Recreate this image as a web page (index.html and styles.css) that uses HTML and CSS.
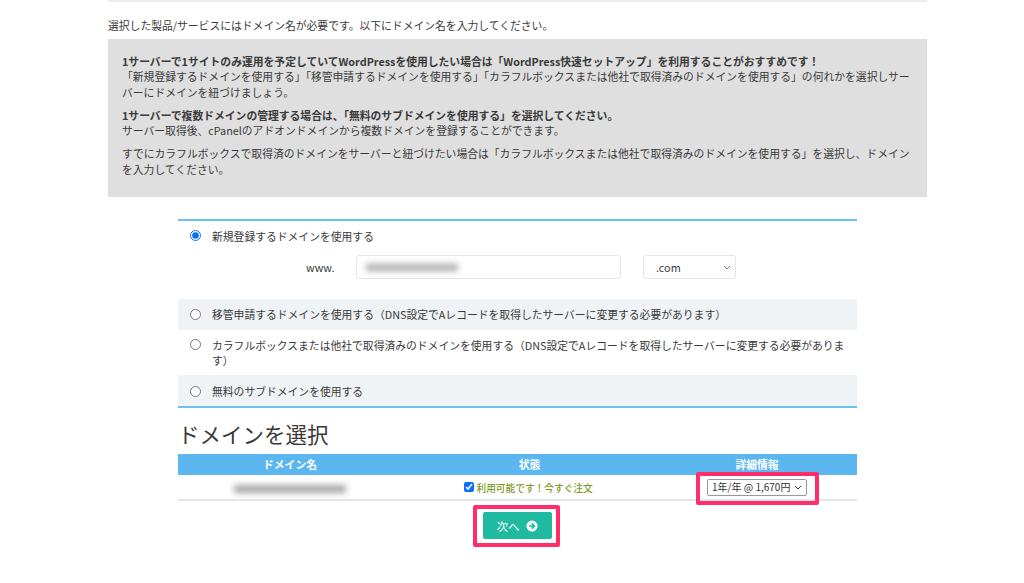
FILE: index.html
```html
<!DOCTYPE html>
<html lang="ja">
<head>
  <meta charset="UTF-8">
  <title>ドメインを選択</title>
  <link rel="stylesheet" href="styles.css">
</head>
<body>
  <div class="page">
    <p class="intro">選択した製品/サービスにはドメイン名が必要です。以下にドメイン名を入力してください。</p>
    <div class="notice">
      <p><strong>1サーバーで1サイトのみ運用を予定していてWordPressを使用したい場合は「WordPress快速セットアップ」を利用することがおすすめです！</strong><br>「新規登録するドメインを使用する」「移管申請するドメインを使用する」「カラフルボックスまたは他社で取得済みのドメインを使用する」の何れかを選択しサーバーにドメインを紐づけましょう。</p>
      <p><strong>1サーバーで複数ドメインの管理する場合は、「無料のサブドメインを使用する」を選択してください。</strong><br>サーバー取得後、cPanelのアドオンドメインから複数ドメインを登録することができます。</p>
      <p>すでにカラフルボックスで取得済のドメインをサーバーと紐づけたい場合は「カラフルボックスまたは他社で取得済みのドメインを使用する」を選択し、ドメインを入力してください。</p>
    </div>

    <div class="content">
      <div class="options">
        <div class="option option-first">
          <label class="option-label"><input type="radio" name="domain" checked><span>新規登録するドメインを使用する</span></label>
          <div class="domain-form">
            <span class="www">www.</span>
            <div class="domain-input"><span class="blur blur-input"></span></div>
            <div class="tld">.com
              <svg class="chevron" width="8" height="5" viewBox="0 0 8 5"><path d="M1 1l3 3 3-3" fill="none" stroke="#777" stroke-width="1"/></svg>
            </div>
          </div>
        </div>
        <div class="option option-alt">
          <label class="option-label"><input type="radio" name="domain"><span>移管申請するドメインを使用する（DNS設定でAレコードを取得したサーバーに変更する必要があります）</span></label>
        </div>
        <div class="option option-wrap">
          <label class="option-label"><input type="radio" name="domain"><span>カラフルボックスまたは他社で取得済みのドメインを使用する（DNS設定でAレコードを取得したサーバーに変更する必要があります）</span></label>
        </div>
        <div class="option option-alt option-last">
          <label class="option-label"><input type="radio" name="domain"><span>無料のサブドメインを使用する</span></label>
        </div>
      </div>

      <h2 class="title">ドメインを選択</h2>
      <table class="domains">
        <thead>
          <tr><th class="col-name">ドメイン名</th><th class="col-status">状態</th><th class="col-info">詳細情報</th></tr>
        </thead>
        <tbody>
          <tr>
            <td class="name"><span class="blur blur-name"></span></td>
            <td class="status"><input type="checkbox" checked> 利用可能です！今すぐ注文</td>
            <td class="info">
              <div class="period">1年/年 @ 1,670円
                <svg class="chevron" width="8" height="5" viewBox="0 0 8 5"><path d="M1 1l3 3 3-3" fill="none" stroke="#333" stroke-width="1"/></svg>
              </div>
              <span class="mark mark-period"></span>
            </td>
          </tr>
        </tbody>
      </table>
      <div class="actions">
        <button class="next" type="button">次へ
          <svg width="12" height="12" viewBox="0 0 13 13"><circle cx="6.5" cy="6.5" r="6" fill="#fff"/><path d="M3.2 6.5h5.6M6.3 3.7l2.8 2.8-2.8 2.8" fill="none" stroke="#1fba9f" stroke-width="1.7"/></svg>
          <span class="mark mark-next"></span>
        </button>
      </div>
    </div>
  </div>
</body>
</html>
```

FILE: styles.css
```css
* {
  box-sizing: border-box;
}
body {
  margin: 0;
  background: #fff;
  color: #3a3a3a;
  font-family: "Noto Sans CJK JP", "Noto Sans", sans-serif;
  font-size: 10.8px;
  line-height: 15.4px;
}
.page {
  width: 819px;
  margin-left: 108px;
  border-top: 2px solid #e9edf2;
  height: 583px;
  overflow: hidden;
}
.intro {
  margin: 16px 0 5.6px;
}
.notice {
  height: 158px;
  padding: 15px 14px 0;
  background: #dfdfdf;
}
.notice p {
  margin: 0 0 7.6px;
}
.notice strong {
  font-weight: 700;
}
.content {
  width: 679px;
  margin: 22px 0 0 70px;
}
.options {
  border-top: 2px solid #6cc0f2;
  border-bottom: 2px solid #6cc0f2;
}
.option {
  padding: 8px 12px 6px;
}
.option-first {
  height: 78px;
}
.option-alt {
  height: 31px;
  background: #eff3f6;
}
.option-wrap {
  height: 45px;
}
.option-last {
  padding-top: 9px;
}
.option-label {
  display: flex;
  gap: 11px;
  line-height: 15px;
}
.option-label input {
  flex: none;
  width: 11px;
  height: 11px;
  margin: 1px 0 0;
  accent-color: #0d6efd;
}
.option-alt .option-label input {
  margin-top: 2px;
}
.domain-form {
  display: flex;
  align-items: center;
  margin: 11px 0 0 116px;
}
.www {
  width: 50px;
  padding-top: 1px;
}
.domain-input {
  display: flex;
  align-items: center;
  width: 265px;
  height: 24px;
  padding-left: 9px;
  border: 1px solid #dfe7ef;
  border-radius: 3px;
}
.tld {
  display: flex;
  align-items: center;
  justify-content: space-between;
  width: 93px;
  height: 24px;
  margin-left: 22px;
  padding: 1px 4px 0 12px;
  border: 1px solid #dfe7ef;
  border-radius: 3px;
}
.blur {
  display: block;
  background: #aaa;
  filter: blur(3px);
}
.blur-input {
  width: 92px;
  height: 7px;
  margin-top: 1px;
}
.blur-name {
  width: 112px;
  height: 8px;
  margin: 0 auto;
  background: #a6a6a6;
}
.title {
  margin: 11px 0 5px;
  font-size: 21.5px;
  line-height: 30px;
  font-weight: 400;
}
.domains {
  width: 100%;
  border-collapse: collapse;
  table-layout: fixed;
}
.domains th {
  height: 21px;
  padding: 1px 0 0;
  background: #5cb6f0;
  color: #fff;
  font-weight: 700;
}
.col-name {
  width: 224px;
}
.col-info {
  width: 200px;
}
.domains td {
  height: 25px;
  padding: 0;
  border-bottom: 2px solid #e5e5e5;
  text-align: center;
}
.domains .name {
  padding-top: 4px;
}
.domains .status {
  padding: 3px 2px 0 0;
  color: #7d9a1e;
  font-size: 9.7px;
  font-weight: 500;
}
.status input {
  width: 10px;
  height: 10px;
  margin: 0;
  accent-color: #0d6efd;
}
.info {
  position: relative;
}
.period {
  display: flex;
  align-items: center;
  justify-content: space-between;
  width: 100px;
  height: 17px;
  margin: 0 auto;
  padding: 0 4px 0 4px;
  border: 1px solid #999;
  border-radius: 2px;
  color: #333;
  white-space: nowrap;
  font-size: 10px;
}
.actions {
  display: flex;
  justify-content: center;
  margin: 11px 0 0 -1px;
}
.next {
  position: relative;
  display: flex;
  align-items: center;
  justify-content: center;
  gap: 6px;
  width: 69px;
  height: 27px;
  padding: 0;
  border: 0;
  border-radius: 2px;
  background: #1fba9f;
  color: #fff;
  font-family: inherit;
  font-size: 11.5px;
}
.mark {
  position: absolute;
  border: 4px solid #ff2d6b;
  border-radius: 2px;
  pointer-events: none;
}
.mark-period {
  top: -3px;
  left: 39px;
  width: 123px;
  height: 33px;
}
.mark-next {
  top: -7px;
  left: -10px;
  width: 87px;
  height: 42px;
}
```
